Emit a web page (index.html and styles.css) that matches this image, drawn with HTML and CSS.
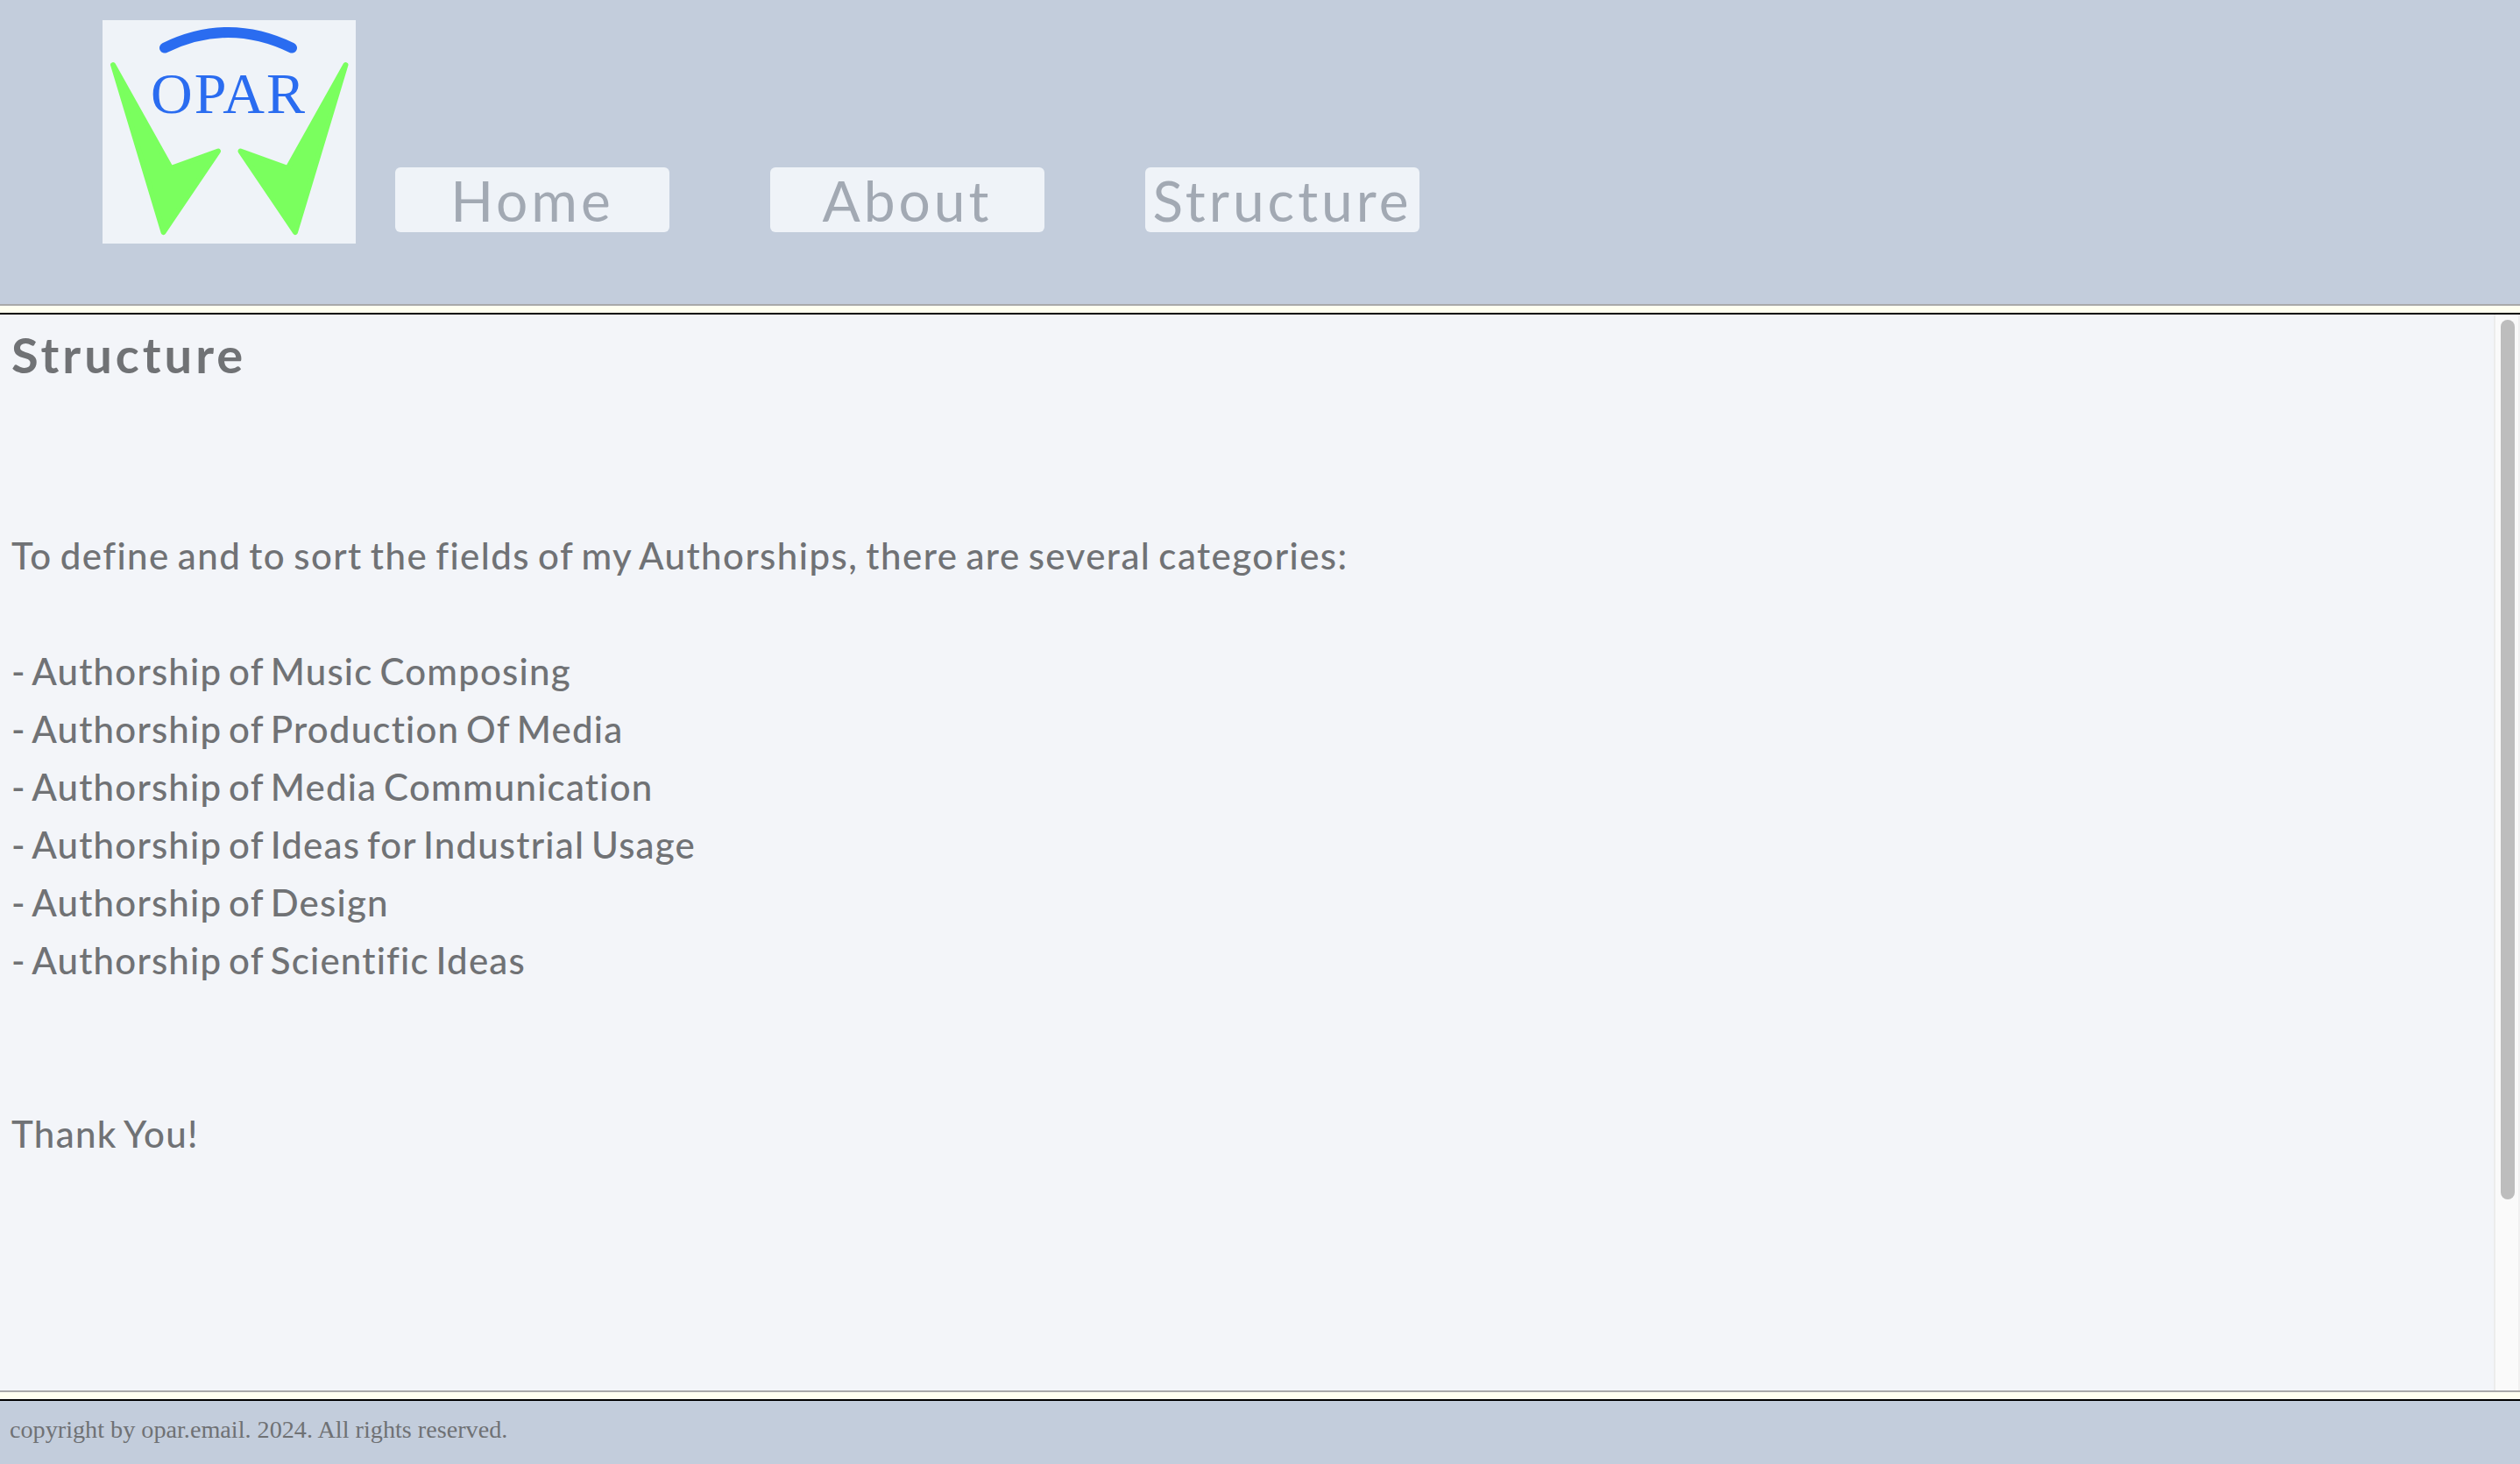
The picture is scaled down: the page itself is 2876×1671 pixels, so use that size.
FILE: index.html
```html
<!DOCTYPE html>
<html lang="en">
<head>
<meta charset="utf-8">
<title>Structure</title>
<link rel="stylesheet" href="styles.css">
</head>
<body>
<header class="site-header">
  <svg class="logo" viewBox="0 0 289 255" role="img" aria-label="OPAR logo">
    <rect width="289" height="255" fill="#eff3f8"/>
    <path d="M71 31.6Q143.5 -3.6 216 31.6" fill="none" stroke="#2a6cf0" stroke-width="12" stroke-linecap="round"/>
    <path d="M12 51L78 169L132 149.5L69.5 242Z" fill="#7aff5e" stroke="#7aff5e" stroke-width="6" stroke-linejoin="round"/>
    <path d="M277.5 51L211.5 169L157.5 149.5L220 242Z" fill="#7aff5e" stroke="#7aff5e" stroke-width="6" stroke-linejoin="round"/>
    <text class="logo-text" x="144" y="106" text-anchor="middle">OPAR</text>
  </svg>
  <nav class="nav">
    <a class="nav-link" href="#">Home</a>
    <a class="nav-link" href="#">About</a>
    <a class="nav-link" href="#">Structure</a>
  </nav>
</header>
<div class="rule"></div>
<main class="content">
  <h1 class="title">Structure</h1>
  <p class="intro">To define and to sort the fields of my Authorships, there are several categories:</p>
  <ul class="list">
    <li>- Authorship of Music Composing</li>
    <li>- Authorship of Production Of Media</li>
    <li>- Authorship of Media Communication</li>
    <li>- Authorship of Ideas for Industrial Usage</li>
    <li>- Authorship of Design</li>
    <li>- Authorship of Scientific Ideas</li>
  </ul>
  <p class="thanks">Thank You!</p>
  <div class="scrollbar"><div class="scrollbar-thumb"></div></div>
</main>
<div class="rule"></div>
<footer class="site-footer">copyright by opar.email. 2024. All rights reserved.</footer>
</body>
</html>
```
FILE: styles.css
```css
* { box-sizing: border-box; }
html, body { height: 100%; }
body {
  margin: 0;
  display: flex;
  flex-direction: column;
  height: 100vh;
  overflow: hidden;
  background: #f3f5f9;
  color: #707275;
  font-family: "Lato", sans-serif;
}
.site-header {
  flex: 0 0 347px;
  display: flex;
  align-items: flex-start;
  padding: 23px 0 0 117px;
  background: #c3cddc;
}
.logo { display: block; width: 289px; height: 255px; flex: none; }
.logo-text { font-family: "Liberation Serif", serif; font-size: 66px; letter-spacing: 2px; fill: #2a6cf0; }
.nav { display: flex; gap: 115px; margin: 168px 0 0 45px; }
.nav-link {
  display: flex;
  align-items: center;
  justify-content: center;
  width: 313px;
  height: 74px;
  border-radius: 6px;
  background: #eff3f8;
  color: #a2a9b3;
  font-size: 64px;
  text-decoration: none;
  letter-spacing: 4px;
}
.rule {
  flex: 0 0 12px;
  background: #fffff0;
  border-top: 2px solid #a9a9a9;
  border-bottom: 2px solid #000;
}
.content {
  position: relative;
  flex: 1 1 0;
  min-height: 0;
  overflow: hidden;
  padding: 13px 0 0 13px;
  background: #f3f5f9;
}
.scrollbar {
  position: absolute;
  top: 0;
  right: 0;
  bottom: 0;
  width: 30px;
  padding: 6px 0 0 6px;
  background: #fafafa;
  border-left: 2px solid #ececec;
  border-right: 2px solid #f0f0f0;
}
.scrollbar-thumb { width: 16px; height: 1004px; border-radius: 8px; background: #bdbdbd; }
.title { margin: 0; font-size: 56px; line-height: 66px; font-weight: 700; letter-spacing: 4px; }
.intro, .thanks, .list { margin: 0; font-size: 42px; line-height: 66px; font-weight: 500; letter-spacing: 1.3px; word-spacing: -3px; }
.intro { margin-top: 163px; letter-spacing: 1.45px; }
.list { margin-top: 66px; padding: 0; list-style: none; letter-spacing: 1.2px; word-spacing: -4px; }
.thanks { margin-top: 132px; }
.site-footer {
  flex: 0 0 72px;
  padding: 16px 0 0 11px;
  background: #c3cddc;
  color: #6f7174;
  font-family: "Liberation Serif", serif;
  font-size: 28.2px;
  line-height: 34px;
}
```
